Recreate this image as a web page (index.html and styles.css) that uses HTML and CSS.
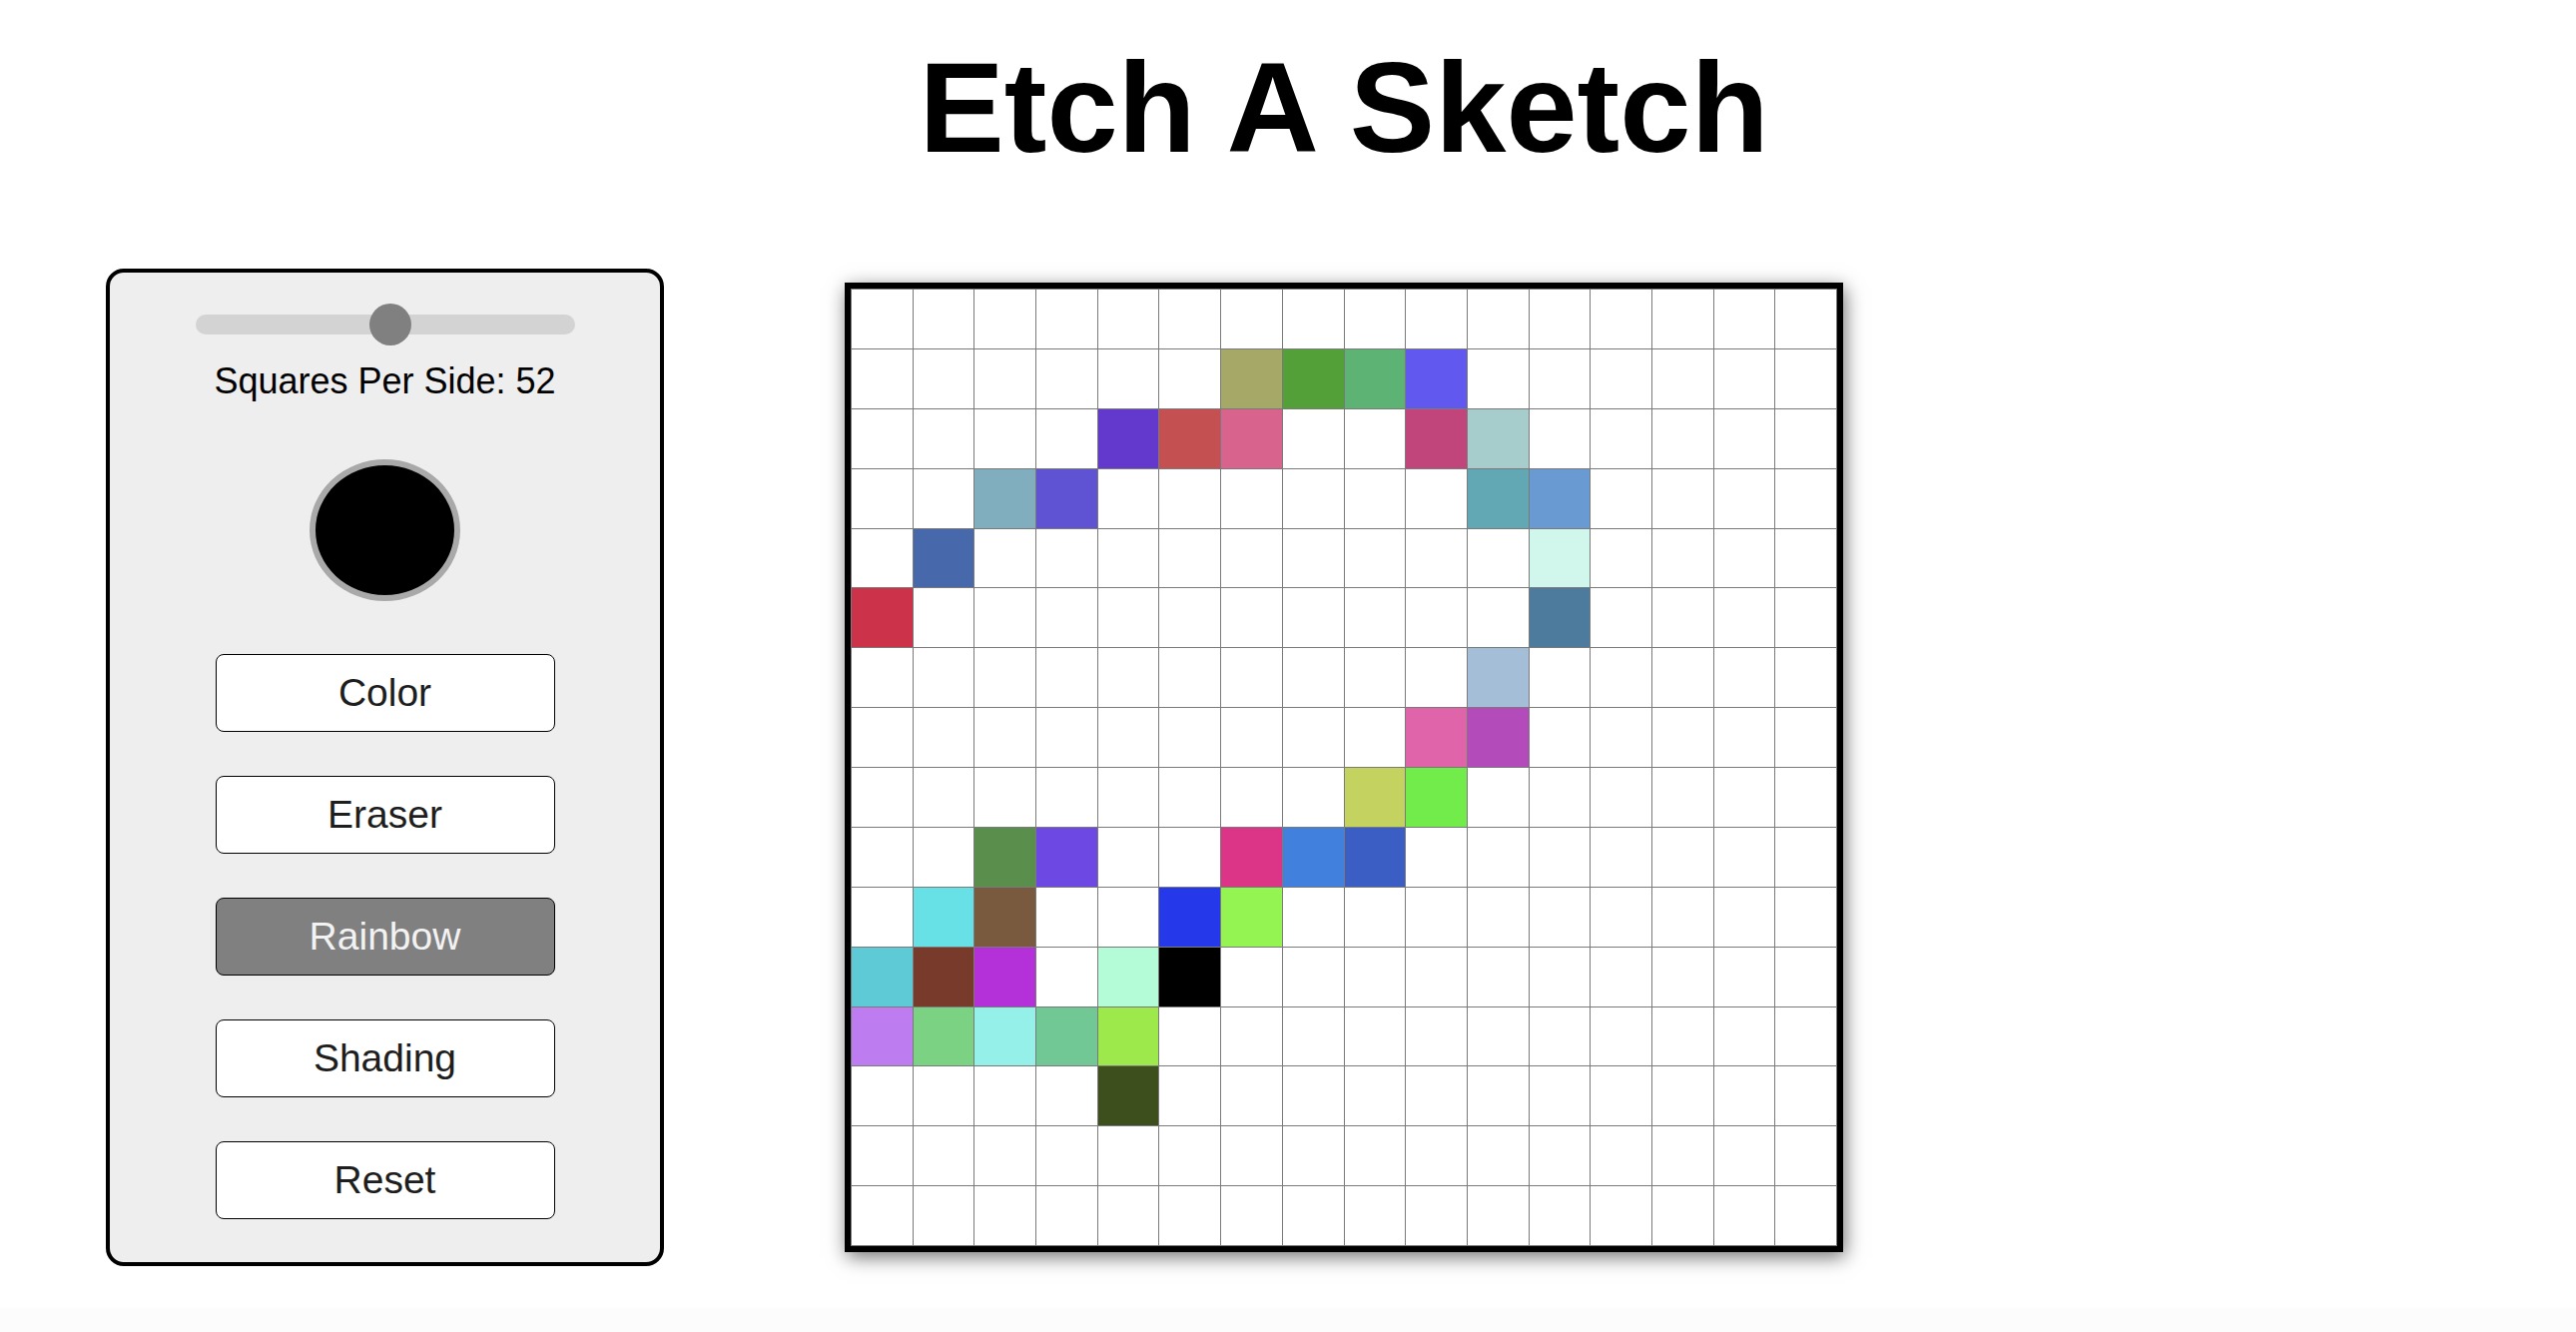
FILE: index.html
```html
<!DOCTYPE html>
<html lang="en">
<head>
    <meta charset="UTF-8">
    <meta name="viewport" content="width=device-width, initial-scale=1.0">
    <title>Etch A Sketch</title>
    <link rel="stylesheet" href="styles.css">
</head>
<body>
    <div class="layout">
        <h1 class="title">Etch A Sketch</h1>

        <div class="controls">
            <input type="range" id="size-slider" class="slider" min="1" max="100" value="52">
            <p class="size-label">Squares Per Side: <span id="size-value">52</span></p>
            <div class="color-swatch" id="color-picker"></div>
            <button class="mode-btn" id="color-btn">Color</button>
            <button class="mode-btn" id="eraser-btn">Eraser</button>
            <button class="mode-btn active" id="rainbow-btn">Rainbow</button>
            <button class="mode-btn" id="shading-btn">Shading</button>
            <button class="mode-btn" id="reset-btn">Reset</button>
        </div>

        <div class="board" id="board"></div>
    </div>

    <footer class="page-foot"></footer>

    <script>
        // squares already drawn in rainbow mode, keyed "row,col"
        const painted = {
            '1,6': '#a6a867', '1,7': '#52a037', '1,8': '#5db373', '1,9': '#6158ef',
            '2,4': '#6339cd', '2,5': '#c55052', '2,6': '#d8648e', '2,9': '#c1457a', '2,10': '#a6cdcc',
            '3,2': '#81aebe', '3,3': '#5f53d4', '3,10': '#62a8b4', '3,11': '#699bd2',
            '4,1': '#4769ab', '4,11': '#d1f7ec',
            '5,0': '#cc334a', '5,11': '#4d7b9e',
            '6,10': '#a4bed8',
            '7,9': '#e064a9', '7,10': '#b44bbb',
            '8,8': '#c4d260', '8,9': '#72ec4b',
            '9,2': '#5a8e4d', '9,3': '#6e48e2', '9,6': '#dc3587', '9,7': '#4280de', '9,8': '#3a5ec3',
            '10,1': '#68e1e6', '10,2': '#7a5a3e', '10,5': '#2639ea', '10,6': '#94f552',
            '11,0': '#5ecad6', '11,1': '#773a2b', '11,2': '#b431d9', '11,4': '#b4fbd8', '11,5': '#000000',
            '12,0': '#bd7cf0', '12,1': '#7cd283', '12,2': '#96f0ea', '12,3': '#72c895', '12,4': '#9de84a',
            '13,4': '#3e4f1e'
        };

        const board = document.getElementById('board');
        const size = 16;

        for (let row = 0; row < size; row++) {
            for (let col = 0; col < size; col++) {
                const cell = document.createElement('div');
                cell.className = 'cell';
                const color = painted[row + ',' + col];
                if (color) cell.style.backgroundColor = color;
                board.appendChild(cell);
            }
        }
    </script>
</body>
</html>
```

FILE: styles.css
```css
body {
    margin: 0;
    font-family: "Liberation Sans", Arial, sans-serif;
    background-color: #ffffff;
    color: #000000;
}

.layout {
    display: grid;
    grid-template-columns: 559px 1000px;
    column-gap: 181px;
    row-gap: 88px;
    align-items: center;
    padding: 34px 0 0 106px;
}

.title {
    grid-column: 2;
    grid-row: 1;
    margin: 0;
    font-size: 128px;
    font-weight: bold;
    text-align: center;
}

.controls {
    grid-column: 1;
    grid-row: 2;
    box-sizing: border-box;
    height: 999px;
    display: flex;
    flex-direction: column;
    align-items: center;
    padding-top: 42px;
    background-color: #eeeeee;
    border: 4px solid #000000;
    border-radius: 18px;
}

.slider {
    -webkit-appearance: none;
    appearance: none;
    width: 380px;
    height: 20px;
    margin: 0;
    background: #d3d3d3;
    border-radius: 10px;
    outline: none;
}

.slider::-webkit-slider-thumb {
    -webkit-appearance: none;
    appearance: none;
    width: 42px;
    height: 42px;
    border-radius: 50%;
    background: #808080;
    cursor: pointer;
}

.size-label {
    margin: 26px 0 0;
    font-size: 36px;
}

.color-swatch {
    box-sizing: border-box;
    width: 151px;
    height: 142px;
    margin-top: 57px;
    background-color: #000000;
    border: 6px solid #a9a9a9;
    border-radius: 50%;
}

.mode-btn {
    box-sizing: border-box;
    width: 340px;
    height: 78px;
    margin-top: 44px;
    padding: 0;
    font-family: "Liberation Sans", Arial, sans-serif;
    font-size: 39px;
    color: #1e1e1e;
    background-color: #ffffff;
    border: 1px solid #000000;
    border-radius: 8px;
    cursor: pointer;
}

#color-btn {
    margin-top: 53px;
}

.mode-btn.active {
    background-color: #808080;
    color: #f2f2f2;
}

.board {
    grid-column: 2;
    grid-row: 2;
    box-sizing: border-box;
    width: 1000px;
    height: 971px;
    display: grid;
    grid-template-columns: repeat(16, 1fr);
    grid-template-rows: repeat(16, 1fr);
    gap: 1px;
    padding: 1px;
    background-color: #7a7a7a;
    border: 6px solid #000000;
    box-shadow: 2px 5px 18px rgba(0, 0, 0, 0.55);
}

.cell {
    background-color: #ffffff;
}

.page-foot {
    height: 24px;
    margin-top: 42px;
    background-color: #fcfcfc;
}
```
